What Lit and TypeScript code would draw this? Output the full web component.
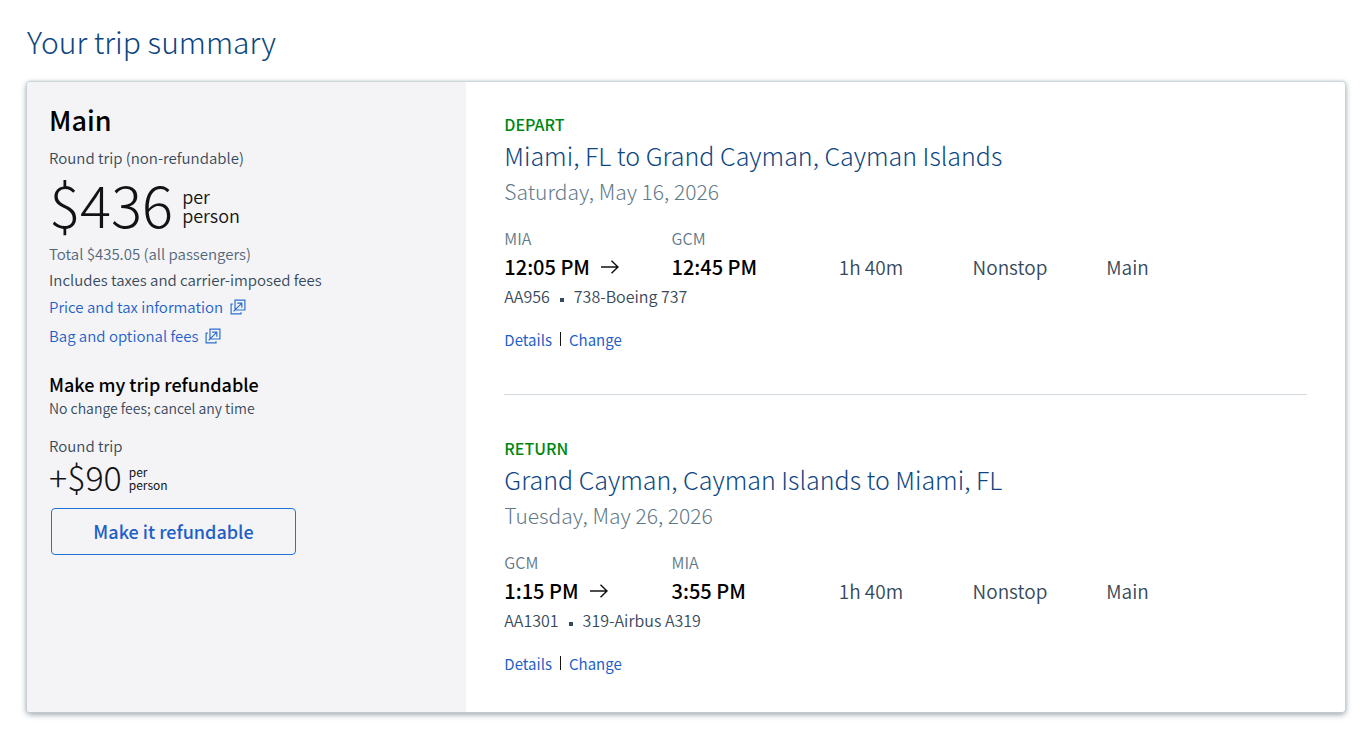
import { LitElement, html, css, svg } from "lit";
import { customElement, property } from "lit/decorators.js";

interface Flight {
  label: string;
  route: string;
  date: string;
  from: string;
  to: string;
  departs: string;
  arrives: string;
  flight: string;
  aircraft: string;
  duration: string;
  stops: string;
  cabin: string;
}

const flights: Flight[] = [
  {
    label: "DEPART",
    route: "Miami, FL to Grand Cayman, Cayman Islands",
    date: "Saturday, May 16, 2026",
    from: "MIA",
    to: "GCM",
    departs: "12:05 PM",
    arrives: "12:45 PM",
    flight: "AA956",
    aircraft: "738-Boeing 737",
    duration: "1h 40m",
    stops: "Nonstop",
    cabin: "Main",
  },
  {
    label: "RETURN",
    route: "Grand Cayman, Cayman Islands to Miami, FL",
    date: "Tuesday, May 26, 2026",
    from: "GCM",
    to: "MIA",
    departs: "1:15 PM",
    arrives: "3:55 PM",
    flight: "AA1301",
    aircraft: "319-Airbus A319",
    duration: "1h 40m",
    stops: "Nonstop",
    cabin: "Main",
  },
];

const popupIcon = html`<svg class="popup" viewBox="0 0 16 16" aria-hidden="true">
  ${svg`<path d="M5 1.1H14.9V11H5z M2.8 5.1H1.1V14.9H11V13.2 M3.6 12.4L11.6 4.4 M7.2 4.2h4.6v4.6" />`}
</svg>`;

@customElement("flight-slice")
export class FlightSlice extends LitElement {
  @property({ attribute: false }) flight!: Flight;

  static styles = css`
    :host {
      display: block;
      line-height: 24px;
      color: #36495a;
    }
    h3,
    p {
      margin: 0;
      font-weight: 300;
    }
    .label {
      color: #008712;
      font-size: 16px;
      font-weight: 500;
    }
    .route {
      margin-top: 3px;
      color: #0d4681;
      font-size: 25px;
      line-height: 32px;
    }
    .date {
      margin-top: 4px;
      color: #627a88;
      font-size: 21px;
      line-height: 32px;
    }
    .grid {
      display: grid;
      grid-template-columns: 5fr 5fr 4fr 4fr 6fr;
      row-gap: 5px;
      margin-top: 19px;
    }
    .airport {
      color: #627a88;
      font-size: 16px;
      font-weight: 350;
    }
    .to {
      grid-column: 2 / -1;
    }
    .time {
      display: flex;
      align-items: center;
      gap: 11px;
      color: #000;
      font-size: 20px;
      font-weight: 500;
    }
    .arrow {
      width: 18px;
      height: 14px;
      fill: none;
      stroke: #131313;
      stroke-width: 1.5;
    }
    .fact {
      font-size: 19px;
      font-weight: 350;
    }
    .plane {
      display: flex;
      align-items: center;
      gap: 10px;
      grid-column: 1 / -1;
      font-size: 16px;
      font-weight: 350;
    }
    .dot {
      width: 4px;
      height: 4px;
      margin-top: 8px;
      background: #36495a;
    }
    .links {
      display: flex;
      align-items: center;
      gap: 8px;
      margin-top: 20px;
      font-size: 15px;
    }
    .bar {
      width: 1px;
      height: 14px;
      margin-bottom: 2px;
      background: #131313;
    }
    a {
      color: #1f5fc8;
      text-decoration: none;
    }
  `;

  render() {
    const f = this.flight;
    return html`
      <p class="label">${f.label}</p>
      <h3 class="route">${f.route}</h3>
      <p class="date">${f.date}</p>
      <div class="grid">
        <span class="airport">${f.from}</span>
        <span class="airport to">${f.to}</span>
        <span class="time">
          ${f.departs}
          <svg class="arrow" viewBox="0 0 18 14" aria-hidden="true">
            <path d="M0 7H17 M10.5 0.8L17 7L10.5 13.2" />
          </svg>
        </span>
        <span class="time">${f.arrives}</span>
        <span class="fact">${f.duration}</span>
        <span class="fact">${f.stops}</span>
        <span class="fact">${f.cabin}</span>
        <span class="plane">${f.flight}<span class="dot"></span>${f.aircraft}</span>
      </div>
      <div class="links">
        <a href="#details">Details</a><span class="bar"></span><a href="#change">Change</a>
      </div>
    `;
  }
}

@customElement("app-root")
export class AppRoot extends LitElement {
  static styles = css`
    :host {
      display: block;
      padding: 23px 22px 22px 27px;
      background: #fff;
      color: #36495a;
      font-family: "Noto Sans CJK SC", "Noto Sans", sans-serif;
      font-size: 15px;
      line-height: 24px;
    }
    h1,
    h2,
    h3,
    p {
      margin: 0;
    }
    h1 {
      color: #0d4681;
      font-size: 30px;
      font-weight: 300;
      line-height: 36px;
    }
    .card {
      display: grid;
      grid-template-columns: 1fr 2fr;
      margin-top: 23px;
      border-radius: 3px;
      background: #fff;
      box-shadow: 0 0 2px 1px #c6d0d6, 0 2px 6px rgba(54, 73, 90, 0.6);
    }
    .fare {
      padding: 21px 22px 36px;
      border-radius: 3px 0 0 3px;
      background: #f4f4f7;
      font-weight: 350;
    }
    .cabin {
      color: #000;
      font-size: 27px;
      font-weight: 500;
      line-height: 34px;
    }
    .kind {
      margin-top: 9px;
    }
    .price {
      display: flex;
      align-items: center;
      gap: 9px;
      margin-top: 3px;
      color: #131313;
      font-size: 58px;
      font-weight: 300;
      line-height: 60px;
    }
    .per {
      padding-top: 5px;
      font-size: 18px;
      font-weight: 350;
      line-height: 19px;
    }
    .total {
      margin-top: 9px;
      color: #52667a;
    }
    .taxes {
      margin-top: 2px;
    }
    .link {
      display: flex;
      align-items: center;
      gap: 7px;
      margin-top: 5px;
    }
    .first {
      margin-top: 3px;
    }
    a {
      color: #1f5fc8;
      text-decoration: none;
    }
    .popup {
      width: 16px;
      height: 16px;
      fill: none;
      stroke: #2b6fd0;
      stroke-width: 1.2;
    }
    .upsell {
      margin-top: 24px;
      color: #000;
      font-size: 18px;
      font-weight: 500;
    }
    .note {
      font-size: 14px;
    }
    .trip {
      margin-top: 14px;
    }
    .extra {
      display: flex;
      align-items: center;
      gap: 7px;
      margin-top: 3px;
      color: #131313;
      font-size: 34px;
      font-weight: 300;
      line-height: 32px;
    }
    .small {
      padding-top: 2px;
      font-size: 12px;
      font-weight: 400;
      line-height: 13px;
    }
    button {
      display: block;
      width: 245px;
      height: 47px;
      margin: 15px 0 0 2px;
      padding: 0 0 2px;
      border: 1px solid #1f75d6;
      border-radius: 4px;
      background: transparent;
      color: #1f5fc8;
      font: 500 18px/24px "Noto Sans CJK SC", "Noto Sans", sans-serif;
    }
    .trips {
      padding: 30px 38px 36px;
    }
    .trips flight-slice + flight-slice {
      margin-top: 42px;
      padding-top: 41px;
      border-top: 1px solid #d0dae0;
    }
  `;

  render() {
    return html`
      <h1>Your trip summary</h1>
      <section class="card">
        <div class="fare">
          <h2 class="cabin">Main</h2>
          <p class="kind">Round trip (non-refundable)</p>
          <div class="price">$436<span class="per">per<br />person</span></div>
          <p class="total">Total $435.05 (all passengers)</p>
          <p class="taxes">Includes taxes and carrier-imposed fees</p>
          <a class="link first" href="#price">Price and tax information ${popupIcon}</a>
          <a class="link" href="#bags">Bag and optional fees ${popupIcon}</a>
          <h3 class="upsell">Make my trip refundable</h3>
          <p class="note">No change fees; cancel any time</p>
          <p class="trip">Round trip</p>
          <div class="extra">+$90<span class="small">per<br />person</span></div>
          <button type="button">Make it refundable</button>
        </div>
        <div class="trips">
          ${flights.map((f) => html`<flight-slice .flight=${f}></flight-slice>`)}
        </div>
      </section>
    `;
  }
}
